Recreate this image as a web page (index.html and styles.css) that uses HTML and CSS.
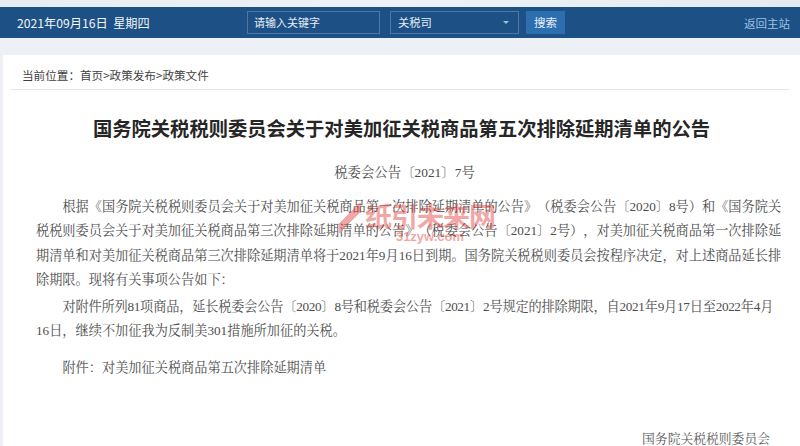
FILE: index.html
```html
<!DOCTYPE html>
<html lang="zh-CN">
<head>
<meta charset="utf-8">
<title>国务院关税税则委员会关于对美加征关税商品第五次排除延期清单的公告</title>
<link rel="stylesheet" href="styles.css">
</head>
<body>
<div class="topstrip"></div>
<header class="header">
  <div class="date">2021年09月16日&nbsp;&nbsp;星期四</div>
  <div class="search">
    <div class="input">请输入关键字</div>
    <div class="select"><span>关税司</span><span class="caret"></span></div>
    <div class="btn">搜索</div>
  </div>
  <a class="back">返回主站</a>
</header>
<div class="gap"></div>
<main class="card">
  <div class="crumb">当前位置：首页&gt;政策发布&gt;政策文件</div>
  <h1 class="title">国务院关税税则委员会关于对美加征关税商品第五次排除延期清单的公告</h1>
  <div class="docno">税委会公告〔2021〕7号</div>
  <div class="body">
    <p class="p1"><span class="ln first">根据《国务院关税税则委员会关于对美加征关税商品第一次排除延期清单的公告》（税委会公告〔2020〕8号）和《国务院关</span><span class="ln">税税则委员会关于对美加征关税商品第三次排除延期清单的公告》（税委会公告〔2021〕2号），对美加征关税商品第一次排除延</span><span class="ln">期清单和对美加征关税商品第三次排除延期清单将于2021年9月16日到期。国务院关税税则委员会按程序决定，对上述商品延长排</span><span class="ln last">除期限。现将有关事项公告如下：</span></p>
    <p class="p2"><span class="ln first tight">对附件所列81项商品，延长税委会公告〔2020〕8号和税委会公告〔2021〕2号规定的排除期限，自2021年9月17日至2022年4月</span><span class="ln last">16日，继续不加征我为反制美301措施所加征的关税。</span></p>
    <p class="p3"><span class="ln first last">附件：对美加征关税商品第五次排除延期清单</span></p>
    <p class="sign">国务院关税税则委员会</p>
  </div>
  <div class="watermark">
    <span class="wm-logo"></span>
    <span class="wm-text"><span class="wm-main">纸引未来网</span><span class="wm-sub">31zyw.com</span></span>
  </div>
</main>
</body>
</html>
```
FILE: styles.css
```css
html, body {
  margin: 0;
  padding: 0;
}
body {
  width: 800px;
  height: 446px;
  overflow: hidden;
  background: #edf1f5;
  font-family: "Noto Sans CJK SC", sans-serif;
  text-autospace: no-autospace;
  text-spacing-trim: space-all;
}
.topstrip {
  height: 7px;
  background: linear-gradient(90deg, #e7ecf1, #eef2f6 50%, #e4eaf0);
}
.header {
  height: 31px;
  background: #1d5185;
  display: flex;
  align-items: center;
  padding-left: 17px;
  padding-right: 10px;
  box-sizing: border-box;
}
.date {
  color: #f2f5f9;
  font-size: 12.2px;
  width: 230px;
}
.search {
  display: flex;
  align-items: center;
  gap: 7px;
}
.input {
  width: 133px;
  height: 23px;
  box-sizing: border-box;
  border: 1px solid #4c78a6;
  color: #e6edf5;
  font-size: 11px;
  line-height: 21px;
  padding-left: 6px;
}
.select {
  margin-left: 3px;
  width: 129px;
  height: 23px;
  box-sizing: border-box;
  border: 1px solid #4c78a6;
  color: #e6edf5;
  font-size: 11.3px;
  line-height: 21px;
  padding-left: 7px;
  padding-right: 9px;
  display: flex;
  justify-content: space-between;
  align-items: center;
}
.caret {
  width: 0;
  height: 0;
  border-left: 3px solid transparent;
  border-right: 3px solid transparent;
  border-top: 3px solid #aabdd2;
}
.btn {
  width: 39px;
  height: 23px;
  background: #2d6eb0;
  color: #e9f0f7;
  font-size: 11.5px;
  line-height: 23px;
  text-align: center;
}
.back {
  margin-left: auto;
  color: #9cc0e4;
  font-size: 11.5px;
}
.gap {
  height: 17px;
}
.card {
  position: relative;
  margin-left: 3px;
  background: #ffffff;
  height: 400px;
  color: #4a4a4a;
}
.crumb {
  padding: 10px 0 4px 12px;
  margin: 0 10px 0 7px;
  font-size: 11.6px;
  line-height: 20px;
  color: #3f3f3f;
  border-bottom: 1px solid #e3e6ea;
}
.title {
  margin: 24px 0 0;
  text-align: center;
  font-size: 19.3px;
  line-height: 28px;
  font-weight: 700;
  color: #262626;
}
.docno {
  margin-top: 19px;
  text-align: center;
  font-family: "Liberation Serif", "Noto Serif CJK SC", "Noto Sans CJK SC", serif;
  font-size: 13.4px;
  line-height: 24px;
  padding-left: 6px;
}
.body {
  padding: 10px 27px 0 33px;
  font-family: "Liberation Serif", "Noto Serif CJK SC", "Noto Sans CJK SC", serif;
  font-size: 13.2px;
  line-height: 24.4px;
  color: #4d4d4d;
}
.body p {
  margin: 0;
}
.ln {
  display: block;
  white-space: nowrap;
  text-align: justify;
  text-align-last: justify;
}
.ln.first {
  text-indent: 2em;
}
.ln.last {
  text-align-last: left;
}
.ln.tight {
  letter-spacing: -0.4px;
}
.body .p1 {
  margin-bottom: 2px;
}
.body .p2 {
  margin-bottom: 13px;
}
.body .sign {
  text-align: right;
  margin-top: 46px;
  padding-right: 3px;
  font-size: 12.8px;
  color: #5a5a5a;
}
.watermark {
  position: absolute;
  left: 336px;
  top: 146px;
  display: flex;
  align-items: flex-start;
  gap: 4px;
  opacity: 0.42;
  pointer-events: none;
}
.wm-logo {
  width: 22px;
  height: 30px;
  margin-top: 2px;
  background: linear-gradient(135deg, transparent 40%, #e0302a 40%, #e0302a 58%, transparent 58%);
}
.wm-text {
  display: flex;
  flex-direction: column;
  align-items: center;
}
.wm-main {
  font-size: 27px;
  font-weight: 700;
  color: #e0302a;
  line-height: 30px;
  letter-spacing: -1px;
}
.wm-sub {
  font-family: "Liberation Sans", sans-serif;
  font-size: 13px;
  font-weight: 700;
  color: #e0302a;
  line-height: 12px;
}
```
